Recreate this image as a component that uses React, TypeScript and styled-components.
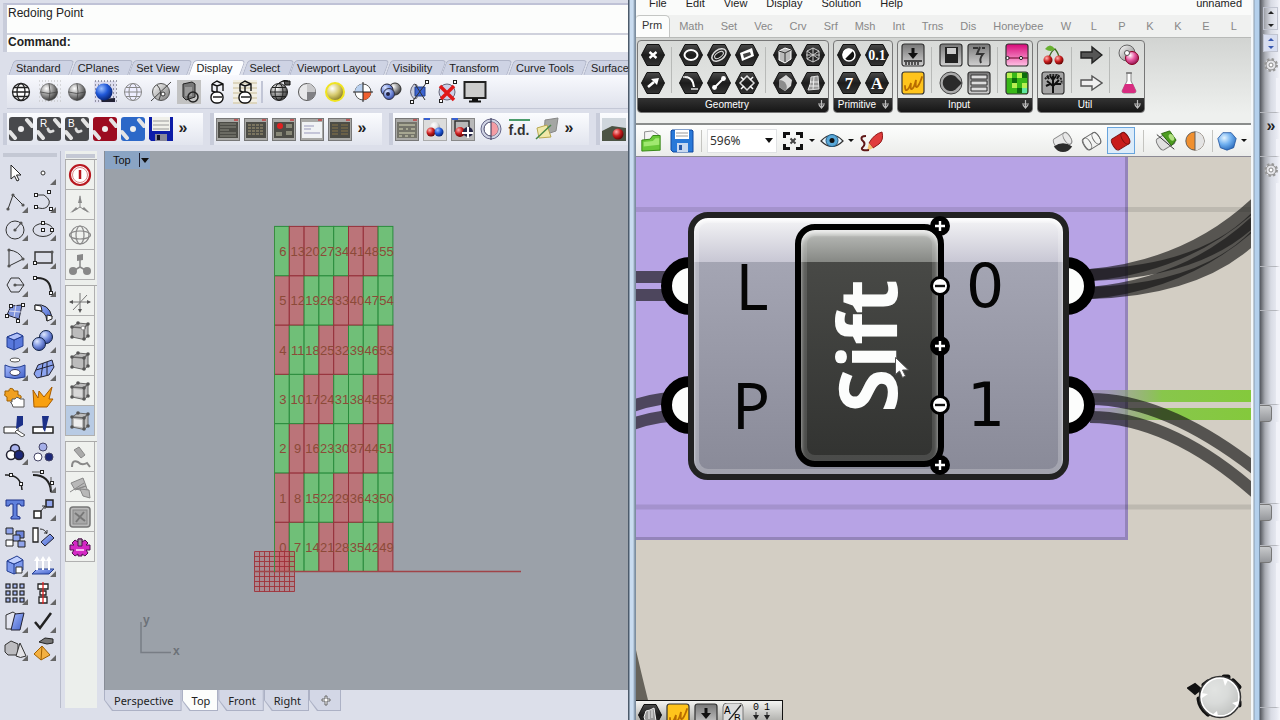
import React from "react";
import styled, { createGlobalStyle, css } from "styled-components";

const GlobalStyle = createGlobalStyle`
  * { box-sizing: border-box; }
  body { margin: 0; background: #dcdfea; font: 11px/14px "Liberation Sans", Arial, sans-serif; color: #222; }
  button, input, select { font: inherit; color: inherit; }
  svg { display: block; flex: none; }
`;

/* ---------- shared parts ---------- */

const Desktop = styled.div`
  display: grid;
  grid-template-columns: minmax(0, 628fr) minmax(0, 632fr) 20px;
  height: 100vh;
  min-height: 700px;
  overflow: hidden;
`;
const PlainButton = styled.button`
  border: 0;
  padding: 0;
  background: none;
  display: flex;
  align-items: center;
  justify-content: center;
  flex: none;
`;
const Defs = styled.svg`
  position: absolute;
  width: 0;
  height: 0;
`;

function Gradients() {
  const ball = (id: string, a: string, b: string, c: string) => (
    <radialGradient id={id} cx="0.35" cy="0.3" r="0.75">
      <stop offset="0" stopColor={a} /><stop offset="0.5" stopColor={b} /><stop offset="1" stopColor={c} />
    </radialGradient>
  );
  return (
    <Defs aria-hidden="true">
      <defs>
        {ball("ballGrey", "#fff", "#999", "#333")}
        {ball("ballLight", "#fff", "#e4e4e6", "#999")}
        {ball("ballBlue", "#9cc0ff", "#2058d8", "#06206c")}
        {ball("ballSoft", "#dfe8ff", "#7c94e0", "#3448a0")}
        {ball("ballRed", "#ffb0b0", "#cc2020", "#5c0000")}
        {ball("ballYellow", "#fff", "#d8cc70", "#807420")}
        {ball("ballPink", "#fff", "#e858a0", "#90104c")}
        {ball("ballSky", "#e4f4ff", "#70b0f0", "#2868b8")}
        {ball("ballGreen", "#c8f090", "#58a020", "#205008")}
        <linearGradient id="hex" x1="0" y1="0" x2="0" y2="1">
          <stop offset="0" stopColor="#4a4a4a" /><stop offset="0.5" stopColor="#1c1c1c" /><stop offset="1" stopColor="#333" />
        </linearGradient>
        <linearGradient id="plate" x1="0" y1="0" x2="0" y2="1">
          <stop offset="0" stopColor="#777" /><stop offset="1" stopColor="#d0d0d0" />
        </linearGradient>
        <linearGradient id="pink" x1="0" y1="0" x2="0" y2="1">
          <stop offset="0" stopColor="#d80878" /><stop offset="1" stopColor="#ffc0e4" />
        </linearGradient>
        <linearGradient id="steel" x1="0" y1="0" x2="1" y2="1">
          <stop offset="0" stopColor="#fff" /><stop offset="1" stopColor="#777" />
        </linearGradient>
        <linearGradient id="azure" x1="0" y1="0" x2="1" y2="1">
          <stop offset="0" stopColor="#a8bcff" /><stop offset="1" stopColor="#4060c8" />
        </linearGradient>
        <linearGradient id="fadeGreen" x1="0" x2="1" y1="0" y2="0">
          <stop offset="0" stopColor="#777" stopOpacity="0.35" /><stop offset="0.1" stopColor="#888c88" stopOpacity="0.5" />
          <stop offset="0.45" stopColor="#84c645" stopOpacity="0.95" /><stop offset="1" stopColor="#84c93c" />
        </linearGradient>
      </defs>
    </Defs>
  );
}

/* ---------- drawings, all on a 24 x 24 grid ---------- */

const S = "#333";
const knob = (x: number, y: number, k = "") => <rect key={k + x + "," + y} x={x - 1.5} y={y - 1.5} width="3" height="3" fill="#fff" stroke="#222" />;
const spot = (x: number, y: number) => <circle key={x + ":" + y} cx={x} cy={y} r="1.6" fill="#555" />;
const line = (d: string, c = S, w = 1) => <path d={d} fill="none" stroke={c} strokeWidth={w} />;
const globe = (fill: string, c = S, w = 1) => (
  <g fill="none" stroke={c} strokeWidth={w}>
    <circle cx="12" cy="12" r="8.5" fill={fill} />
    <ellipse cx="12" cy="12" rx="4" ry="8.5" />
    <path d="M3.5 12h17M5 7.5h14M5 16.5h14" />
  </g>
);
const dots = (c = "#bbb") => <path d="M2 1h22M2 5h22M2 9h22M2 13h22M2 17h22M2 21h22" stroke={c} strokeWidth="1" strokeDasharray="1 2" />;
const ball = (fill: string) => (
  <g><circle cx="12" cy="12" r="8.5" fill={fill} stroke="#444" strokeWidth="0.6" /><path d="M12 3.5q2 8 0 17M3.5 12q8 3 17 0" fill="none" stroke="#444" strokeWidth="0.8" /></g>
);
const film = (c: string, letter?: string) => (
  <g>
    <rect x="0" y="0" width="24" height="24" rx="3" fill={c} />
    <path d="M1 15l5 6M18 3l5 6" stroke="#e4e4e4" strokeWidth="4" strokeLinecap="round" />
    {letter ? <path d="M11 12q1 4 5 2" stroke="#ddd" strokeWidth="3" fill="none" strokeLinecap="round" /> : <circle cx="12" cy="12" r="3" fill="#eee" />}
    {letter && <text x="3" y="10" fontSize="10" fontFamily="Liberation Sans" fill="#fff">{letter}</text>}
  </g>
);
const windowIcon = (body: React.ReactNode, fill = "#4c4c46") => (
  <g>
    <rect x="0.500" y="1.500" width="23" height="22" fill="#a9a9a6" stroke="#777" />
    <rect x="2" y="5" width="20" height="16" fill={fill} />
    <path d="M18 3h4" stroke="#c04040" strokeWidth="1.500" />
    {body}
  </g>
);
const hex = (body: React.ReactNode) => (
  <g><path d="M6 1.500h12l5.500 10.500-5.500 10.500H6L.5 12z" fill="url(#hex)" stroke="#111" />{body}</g>
);
const plate = (body: React.ReactNode, fill = "url(#plate)") => (
  <g><rect x="1" y="1" width="22" height="22" rx="2.500" fill={fill} stroke="#333" strokeWidth="1.200" />{body}</g>
);
const cube = (fill: string, c = "#222", w = 1) => (
  <g fill={fill} stroke={c} strokeWidth={w} strokeLinejoin="round">
    <path d="M4 8l10-4 6 3v10l-9 4-7-3z" /><path d="M4 8l7 3 9-4M11 11v10" fill="none" />
  </g>
);
const meshCube = (mark?: React.ReactNode) => (
  <g>
    <path d="M4 8l6-4 10 1v12l-4 3.500L4 18z" fill="#bcbcbc" stroke="#666" />
    <path d="M4 8l12 1v11.500M16 9l4-4" fill="none" stroke="#666" strokeWidth="1.500" />
    {[[4, 8], [10, 4], [20, 5], [20, 17], [16, 20], [4, 18], [16, 9]].map(([x, y]) => <circle key={x + "-" + y} cx={x} cy={y} r="1.800" fill="#555" />)}
    {mark}
  </g>
);
const scribble = <path d="M4 15q0 5 2 4t4-7q-1 7 1 6t4-9q-1 8 1 7t5-10" fill="none" stroke="#b86c00" strokeWidth="1.800" strokeLinecap="round" />;
const cylinder = (fill: string, c = "#333") => (
  <g transform="rotate(-32 12 12)" stroke={c} strokeWidth="1" fill={fill}>
    <path d="M5 5h13a3 7 0 0 1 0 14H5a3 7 0 0 1 0-14z" /><ellipse cx="17.500" cy="12" rx="3.500" ry="7" />
  </g>
);
const cherry = (x: number, y: number) => <circle cx={x} cy={y} r="4.500" fill="url(#ballRed)" />;

const art: Record<string, React.ReactNode> = {
  globe: globe("#fff", "#222", 1.3),
  shaded: <g>{dots()}{ball("url(#ballGrey)")}</g>,
  rendered: ball("url(#ballGrey)"),
  blueBall: <g><path d="M1 1h22v22H1z" fill="#dde" />{dots("#445")}<path d="M8 19l14-1v4H9z" fill="#223" /><circle cx="11" cy="12" r="8.500" fill="url(#ballBlue)" /></g>,
  ghosted: globe("#eef", "#888"),
  xray: <g><circle cx="12" cy="12" r="8.500" fill="url(#steel)" stroke="#555" /><path d="M2 21L22 2M8 5q6 6 2 15" stroke="#444" fill="none" /><circle cx="14" cy="14" r="2" fill="#fff" stroke="#333" /></g>,
  technical: <g><path d="M0 0h24v24H0z" fill="#c2c2c2" /><path d="M6 4l9-2 3 2v13l-9 3-3-3z" fill="#777" stroke="#222" /><path d="M8 7h7v9H8z" fill="#999" /><circle cx="16" cy="17" r="5" fill="none" stroke="#222" strokeWidth="1.500" /></g>,
  artistic: <g fill="none" stroke="#111" strokeWidth="1.400"><path d="M7 4l5-3 6 3v7M7 4v7l5 2M7 4l5 2 6-2M12 6v6" /><rect x="6" y="12" width="12" height="11" rx="5" fill="#fff" /><path d="M8 17h9" /></g>,
  pen: <g><path d="M0 0h24v24H0z" fill="#f2efe4" /><path d="M0 3h24M0 8h24M0 13h24M0 18h24M0 23h24" stroke="#c8bc98" /><g fill="none" stroke="#111" strokeWidth="1.400"><path d="M7 4l5-3 6 3v7M7 4v7l5 2M7 4l5 2 6-2M12 6v6" /><rect x="6" y="12" width="12" height="11" rx="5" fill="#fff" /><path d="M8 17h9" /></g></g>,
  meshBall: <g>{globe("url(#ballGrey)", "#222")}<path d="M12 3q5-4 9-2M17 1h6v4h-5z" fill="#555" stroke="#111" /></g>,
  quarter: <g><circle cx="12" cy="12" r="8.500" fill="#e8e8ea" stroke="#555" /><path d="M12 3.500a8.500 8.500 0 0 1 8.500 8.500H12z" fill="#c8c8ca" /><path d="M12 12h8.500a8.500 8.500 0 0 1-8.500 8.500z" fill="#808084" /></g>,
  halo: <g><circle cx="12" cy="12" r="9" fill="url(#ballYellow)" stroke="#f0e420" strokeWidth="2" /></g>,
  target: <g><circle cx="12" cy="12" r="8" fill="#fff" stroke="#555" /><path d="M12 12h8a8 8 0 0 1-8 8z" fill="#f06030" /><path d="M12 12V4a8 8 0 0 0-8 8z" fill="#b8d0f0" /><path d="M12 2v20M2 12h20" stroke="#222" /></g>,
  camera: <g><circle cx="16" cy="9" r="6" fill="url(#ballGrey)" stroke="#333" /><circle cx="8" cy="10" r="6" fill="url(#ballSoft)" stroke="#223" /><circle cx="10" cy="14" r="5.500" fill="url(#ballSoft)" stroke="#334" /><circle cx="9" cy="14" r="2" fill="#224" /></g>,
  clip: <g><path d="M7 4q-7 8 0 15l3-1V5z" fill="#c8ccdc" stroke="#667" /><path d="M8 7h10v9H8z" fill="#3c64d0" stroke="#224090" />{line("M5 22L20 2M8 4l10 16", "#333")}{knob(20, 2)}{knob(5, 22)}</g>,
  clipOff: <g><circle cx="12" cy="12" r="8" fill="#ccd0e8" stroke="#667" />{knob(20, 2)}{knob(6, 21)}<path d="M5 6l14 14M19 6L6 19" stroke="#e01818" strokeWidth="3.500" /></g>,
  monitor: <g><rect x="1.500" y="2" width="21" height="16" fill="#ccc" stroke="#222" strokeWidth="2" /><path d="M9 18h6v3H9z" fill="#111" /><path d="M6 21.500h12" stroke="#111" strokeWidth="2" /></g>,
  film: film("#48494c"), filmR: film("#48494c", "R"), filmB: film("#48494c", "B"), filmRed: film("#9c0c20"), filmBlue: film("#2c68c8"),
  floppy: <g><path d="M0 0h24v24H2l-2-2z" fill="#0c1ca8" /><path d="M3 0h18v14H3z" fill="#f0f0ea" /><path d="M4 4h16M4 8h16M4 12h16" stroke="#999" /><path d="M6 17h12v7H6z" fill="#889" /><path d="M8 18h3v5H8z" fill="#112" /></g>,
  win1: windowIcon(<path d="M4 7h16M4 10h16M4 13h9M4 16h16M4 19h16" stroke="#8a8a80" />),
  win2: windowIcon(<path d="M4 8h16M4 11h16M4 14h16M4 17h16" stroke="#a89c78" strokeDasharray="3 1" />),
  win3: windowIcon(<g><circle cx="8" cy="9" r="3" fill="#e02020" /><path d="M14 7h6v4h-6zM4 15h6v4H4zM14 14h6v4h-6z" fill="#887" /></g>),
  win4: windowIcon(<path d="M4 9h10M4 12h7M4 16h16" stroke="#99b" />, "#f0f2f4"),
  win5: windowIcon(<path d="M4 8h6M4 11h6M4 14h6M4 17h6M13 8h7M13 11h7M13 14h7M13 17h7" stroke="#887448" />),
  win6: windowIcon(<path d="M4 8h16M4 12h4M11 12h2M16 12h4M4 16h16M4 19h3M10 19h3M16 19h3" stroke="#b8b8a0" strokeWidth="1.300" />, "#74746a"),
  balls: <g><rect x="0.500" y="1.500" width="23" height="22" fill="#dcdcdc" stroke="#aaa" /><path d="M1 2h6" stroke="#3860d0" strokeWidth="2" /><circle cx="12" cy="10" r="5" fill="url(#ballLight)" /><circle cx="8" cy="15" r="4.500" fill="url(#ballRed)" /><circle cx="16" cy="15" r="4.500" fill="url(#ballBlue)" /></g>,
  ballsMove: <g><rect x="0.500" y="1.500" width="23" height="22" fill="#b8b8b8" stroke="#888" /><path d="M1 2h6" stroke="#3860d0" strokeWidth="2" /><path d="M4 4h14v10H4z" fill="none" stroke="#333" strokeWidth="1.500" /><circle cx="9" cy="15" r="5" fill="url(#ballRed)" /><circle cx="17" cy="15" r="5" fill="#224" /><path d="M17 10v11M11 16h11" stroke="#fff" strokeWidth="2" /></g>,
  disc: <g><circle cx="12" cy="12" r="10" fill="#d0d4e4" stroke="#668" /><circle cx="12" cy="12" r="7" fill="#fff" stroke="#446" /><path d="M12 5a7 7 0 0 1 0 14z" fill="#f49ca4" /><path d="M12 1v22" stroke="#335" /></g>,
  planes: <g><path d="M10 3l13-2-2 13-12 4z" fill="#a4a6a4" stroke="#888" /><path d="M2 11l10-3 4 12-12 1z" fill="#f0e8a8" stroke="#b8a850" /><path d="M1 22L16 8" stroke="#488848" strokeWidth="1.500" /></g>,
  photo: <g><rect x="0" y="1" width="24" height="23" fill="#cfd6dc" /><path d="M0 14l10-5 14 2v13H0z" fill="#4c5444" /><circle cx="16" cy="17" r="5.500" fill="url(#ballRed)" /></g>,

  pointer: <path d="M8 4v14l3.500-3 2.500 5 2-1-2.500-5H18z" fill="#fff" stroke="#222" />,
  point: <circle cx="12" cy="12" r="2" fill="#fff" stroke="#333" />,
  polyline: <g>{line("M5 20L10 6l10 10")}{spot(5, 20)}{spot(10, 6)}{spot(20, 16)}</g>,
  curve: <g>{line("M5 6h8q9 6 3 12-4 3-11 0")}{knob(5, 6)}{knob(18, 3)}{knob(5, 18)}{knob(20, 20)}</g>,
  circle: <g><circle cx="12" cy="13" r="9" fill="none" stroke={S} />{line("M12 13l6-7")}{spot(12, 13)}{spot(18, 6)}</g>,
  ellipse: <g><ellipse cx="12" cy="13" rx="10" ry="6.500" fill="none" stroke={S} />{knob(12, 13)}{knob(12, 6)}{knob(21, 13)}</g>,
  arc: <g>{line("M6 5q10 1 14 9L6 21z")}{spot(6, 5)}{spot(20, 14)}{spot(6, 21)}</g>,
  rect: <g><path d="M4 7h17v11H4z" fill="none" stroke={S} strokeWidth="1.400" />{knob(4, 18)}{spot(21, 7)}</g>,
  polygon: <g>{line("M8 5h8l5 7-5 7H8l-4-7z")}{line("M12 12h9")}{spot(12, 12)}</g>,
  fillet: <g>{line("M5 5q15-1 15 15", "#222", 2)}{knob(4, 5)}{knob(20, 20)}</g>,
  surface: <g><path d="M8 5l11-1-3 14-12-4z" fill="#8094dc" stroke="#223" />{line("M13 4l-2 12M6 10l12 1", "#dde")}{knob(8, 5)}{knob(20, 4)}{knob(4, 15)}{knob(15, 20)}</g>,
  sweep: <g><path d="M4 4q14-2 17 12l-5 4Q15 9 4 9z" fill="url(#azure)" stroke="#222" /><path d="M4 4l6 1 1 5-7-1zM16 14l5 1v3l-5 2z" fill="#fff" stroke="#222" /></g>,
  box: <g>{cube("#5878dc", "#223c90")}<path d="M4 8l10-4 6 3-9 4z" fill="#b0c0f8" stroke="#223c90" /></g>,
  spheres: <g><circle cx="15" cy="8" r="6.500" fill="url(#ballSoft)" stroke="#124" /><circle cx="8" cy="15" r="6.500" fill="url(#ballSoft)" stroke="#124" /></g>,
  extrude: <g><ellipse cx="12" cy="3" rx="5" ry="2" fill="#fff" stroke="#555" /><path d="M2 8q10 5 20 0v12q-10 3-20 0z" fill="url(#azure)" stroke="#223c90" /><ellipse cx="12" cy="15.500" rx="5" ry="3" fill="#fff" stroke="#335" /></g>,
  mesh: <g><path d="M3 17l4-9L21 3l2 7-5 8-12 3z" fill="#8ca4f0" stroke="#223" />{line("M12 6l-2 14M5 13l17-5M16 5l0 13", "#223")}</g>,
  puzzle: <g><path d="M2 6h4q0-4 4-2l1 2h4v4q4 0 3 3l-3 1v2H4v-4q-4-2-2-3z" fill="#f0a020" stroke="#a06000" /><path d="M9 14h3q1-3 4-1l1 1h4v8H10l-1-3q-3-2 0-2z" fill="#fff" stroke="#555" /></g>,
  explode: <path d="M2 5l5 8 1-7 5 6 8-10-3 12 4 0-6 8H3z" fill="#f8a010" stroke="#a85c00" />,
  trim: <g><path d="M1 14h14v6H1z" fill="#fff" stroke="#222" /><path d="M17 3h6v9l-7 4z" fill="#1c3088" transform="translate(-3 0)" /><path d="M14 17l8 5-3 2-7-5z" fill="#fff" stroke="#555" /></g>,
  split: <g><path d="M2 14h20v6H2z" fill="#fff" stroke="#222" strokeWidth="1.500" /><path d="M11 3h7l-4 16-2-3z" fill="#1c3088" /></g>,
  groupOn: <g stroke="#223" strokeWidth="1.500"><circle cx="12" cy="8" r="4.500" fill="#aab4ee" /><circle cx="8" cy="14" r="4.500" fill="#fff" /><circle cx="16" cy="14" r="4.500" fill="#1c2878" /></g>,
  groupOff: <g stroke="#446"><circle cx="12" cy="6" r="4" fill="#a4aee8" /><circle cx="7" cy="16" r="4" fill="#fff" /><circle cx="18" cy="16" r="4" fill="#1c2878" /></g>,
  ptsOn: <g>{line("M2 6q16-1 17 15", "#222", 1.5)}{knob(8, 6)}{knob(18, 15)}</g>,
  blend: <g>{line("M2 6q17 0 18 17", "#222", 2)}{line("M1 3h11M20 8v12", "#555")}{knob(11, 3)}{knob(21, 14)}</g>,
  text: <path d="M3 3h18v6h-3l-1-2h-3v12l3 1v2H8v-2l2-1V7H7L6 9H3z" fill="#6080dc" stroke="#1c3088" />,
  scale: <g><path d="M3 14h7v7H3z" fill="#fff" stroke="#222" strokeWidth="1.500" /><path d="M15 3h7v7h-7z" fill="#90a4ec" stroke="#222" strokeWidth="1.500" />{line("M10 14l4-5M11 9h3v3")}</g>,
  blocks: <g stroke="#222"><path d="M3 3h7v6H3z" fill="#90a4ec" /><path d="M13 6h8v7h-8z" fill="#6c84dc" /><path d="M10 10h7v6h-7z" fill="#90a4ec" /><path d="M3 15h7v6H3z" fill="#fff" /><path d="M15 16h7v6h-7z" fill="#90a4ec" /></g>,
  rotate: <g><path d="M2 3h5v14H2z" fill="#fff" stroke="#222" strokeWidth="1.300" /><path d="M10 17l9-8 4 4-9 8z" fill="url(#azure)" stroke="#223" />{line("M9 4q5 0 7 5M13 8h3V5")}</g>,
  boxed: <g>{cube("#7c98ec", "#223c90")}<path d="M4 8l10-5 6 4-9 4z" fill="#c0d0ff" stroke="#223c90" /><path d="M13 14h6v6h-6z" fill="#fff" stroke="#333" /></g>,
  normals: <g><path d="M1 21l5-5h17l-5 5z" fill="url(#azure)" stroke="#223c90" />{line("M6 17V5M12 17V5M18 17V5", "#fff", 2)}<path d="M3 8l3-5 3 5zM9 8l3-5 3 5zM15 8l3-5 3 5z" fill="#fff" /></g>,
  array: <g stroke="#222" strokeWidth="1.200" fill="#a8b8f0">{[3, 10, 17].flatMap((x) => [3, 10, 17].map((y) => <rect key={x + "_" + y} x={x} y={y} width="4" height="4" />))}</g>,
  align: <g stroke="#222" strokeWidth="1.300" fill="#fff"><path d="M7 3h10v5H7zM9 10h6v4H9zM8 16h8v6H8z" /><path d="M12 1v22" stroke="#e02020" /></g>,
  sheets: <g><path d="M3 6l7-3 3 2-3 15H3z" fill="#e4e6f0" stroke="#333" /><path d="M12 5l9-1-4 17H8z" fill="url(#azure)" stroke="#223" /></g>,
  check: line("M4 13l5 6L20 4", "#222", 2.5),
  solids: <g stroke="#333"><path d="M2 8l6-4 7 3v11H5l-3-3z" fill="#bcbcc0" /><path d="M17 6l6 13q-6 3-10 0z" fill="#e4e4e8" /></g>,
  pyramid: <g><path d="M11 9l8 9-9 5-7-6z" fill="#f4b040" stroke="#a06000" /><path d="M11 9l-1 14" stroke="#a06000" /><path d="M8 5l6-4 8 1v4l-6 1z" fill="#777" stroke="#222" /></g>,

  power: <g fill="none" stroke="#b81820"><circle cx="12" cy="12" r="10" strokeWidth="2.200" fill="#fff" /><circle cx="12" cy="12" r="7.500" stroke="#d88" /><path d="M12 7v9" strokeWidth="2.500" /></g>,
  tripod: <g fill="#888">{line("M12 3v11l-8 5M12 14l8 5", "#888")}<path d="M12 2l2 8h-4zM2 20l8-4-2-2zM22 20l-8-4 2-2z" /></g>,
  wireBall: <g fill="none" stroke="#888" strokeWidth="1.200"><circle cx="12" cy="12" r="9" /><ellipse cx="12" cy="12" rx="4" ry="9" /><ellipse cx="12" cy="12" rx="10.500" ry="4" /></g>,
  nodes: <g fill="#888">{line("M12 6v8l-7 4M12 14l7 4", "#888", 1.5)}<path d="M9 2l6-1v6l-6 1z" /><circle cx="5" cy="18" r="4" /><circle cx="19" cy="18" r="4" /></g>,
  axes: <g fill="#555">{line("M2 13h20M12 4v18M5 21L19 6", "#777")}<path d="M1 13l4-2v4zM23 13l-4-2v4zM12 24l-2-4h4z" /></g>,
  cube1: meshCube(<circle cx="15" cy="9" r="2" fill="#fff" stroke="#888" />), cube2: meshCube(), cube3: meshCube(<path d="M6 10l8 1v7l-8-1z" fill="#d8d8d8" />), cube4: meshCube(<path d="M6 10l8 1v7l-8-1z" fill="#eee" />),
  brush: <g fill="#aaa" stroke="#888"><path d="M6 5l5-3 6 8-4 3z" /><path d="M4 22q0-8 6-5 4 4 9 1l3 4" fill="none" strokeWidth="2" /></g>,
  patches: <g fill="#b8b8b8" stroke="#888"><path d="M3 8l12-5 3 8-11 4zM8 14l10-3 2 6z" /><path d="M12 14l9 1 1 8-7-2z" /><path d="M2 17l14-9" /></g>,
  crossBox: <g><rect x="2" y="2" width="20" height="20" rx="3" fill="#bbb" stroke="#777" strokeWidth="1.500" /><rect x="5" y="5" width="14" height="14" fill="#a8a8a8" stroke="#888" /><path d="M7 8l10 8M16 7l-8 10" stroke="#777" strokeWidth="2" /></g>,
  gear: <g><path d="M10 4h4v3l3-2 3 3-2 2h4v5h-4l2 3-3 3-3-2v2h-4v-2l-3 2-3-3 2-3H2v-5h4L4 8l3-3 3 2z" fill="#d428c4" stroke="#501050" strokeLinejoin="round" /><path d="M8 15l8 0" stroke="#f8b0f0" strokeWidth="2" /><path d="M10 4h4v7h-4z" fill="#999" stroke="#501050" /></g>,

  hexX: hex(line("M8.500 9l7 6M15.500 9l-7 6", "#fff", 2.4)),
  hexArrow: hex(<g>{line("M7 16l6-5", "#fff", 2.6)}<path d="M10 8l8-1-2 7z" fill="#fff" /></g>),
  hexCircle: hex(<ellipse cx="12" cy="12" rx="6.500" ry="5" fill="none" stroke="#fff" strokeWidth="2" />),
  hexArc: hex(<g>{line("M6 6q8 0 9 10", "#fff", 2)}<path d="M4 6h5M12 18h7" stroke="#ddd" strokeWidth="1.500" /></g>),
  hexLoops: hex(<g transform="rotate(-35 12 12)" fill="none" stroke="#ddd"><ellipse cx="12" cy="12" rx="8" ry="5" strokeWidth="1.500" /><ellipse cx="12" cy="12" rx="5" ry="2.500" /></g>),
  hexBone: hex(<g>{line("M7.500 16.500l9-9", "#fff", 2)}<circle cx="7.500" cy="16.500" r="2.400" fill="#fff" /><circle cx="16.500" cy="7.500" r="2.400" fill="#fff" /></g>),
  hexPlane: hex(<g><path d="M5 10l12-5 2 8-12 5z" fill="#fff" /><path d="M8 11l7-2 1 3-7 3z" fill="#444" /></g>),
  hexDiamond: hex(<g><path d="M12 5l7 7-7 7-7-7z" fill="none" stroke="#ddd" strokeWidth="1.500" /><path d="M6 6l3 3M18 6l-3 3M6 18l3-3M18 18l-3-3" stroke="#fff" strokeWidth="1.500" fill="none" /></g>),
  hexBox: hex(<g><path d="M6 8l6-3 6 2v9l-6 4-6-3z" fill="#bbb" stroke="#fff" /><path d="M6 8l6 2 6-3M12 10v9" stroke="#333" fill="none" /></g>),
  hexMesh: hex(<g fill="none" stroke="#ccc"><path d="M6 8l6-3 6 3v8l-6 3-6-3zM6 8l12 8M18 8L6 16M12 5v14M5 12h14" /></g>),
  hexBrep: hex(<g><path d="M6 9l7-5 6 5-1 6-6 5-6-4z" fill="#d8d8d8" /><path d="M6 9q5 0 7 4t-1 7l-6-4z" fill="#8c8c8c" /></g>),
  hexTwist: hex(<g><path d="M10 6l7-1 1 13-11 1q3-6 3-13z" fill="#999" stroke="#ddd" /><path d="M9 11h9M8 15h10M13 6l-1 12" stroke="#eee" /></g>),
  hexBool: hex(<g><circle cx="12" cy="12" r="6" fill="#111" stroke="#fff" strokeWidth="1.500" /><path d="M7.800 16.200A6 6 0 1 1 16.200 7.800z" fill="#fff" /></g>),
  hexNum: hex(<text x="12" y="17" fontSize="14" fontWeight="700" textAnchor="middle" fontFamily="Liberation Serif" fill="#fff">0.1</text>),
  hexInt: hex(<text x="12" y="18" fontSize="17" fontWeight="700" textAnchor="middle" fontFamily="Liberation Serif" fill="#fff">7</text>),
  hexTextA: hex(<text x="12" y="18" fontSize="17" fontWeight="700" textAnchor="middle" fontFamily="Liberation Serif" fill="#fff">A</text>),
  import: plate(<g><path d="M12 5v6" stroke="#111" strokeWidth="3" /><path d="M7 10h10l-5 6z" fill="#111" /><path d="M3 18h18M5 19v3M8 19v3M11 19v3M14 19v3M17 19v3" stroke="#222" strokeWidth="1.400" /></g>),
  slider: plate(<g>{scribble}</g>, "#ffc41c"),
  toggle: plate(<g><rect x="6" y="4" width="13" height="16" fill="#222" /><rect x="8" y="5" width="9" height="6" fill="#ccc" /></g>),
  knobIcon: <g><circle cx="12" cy="12" r="11" fill="#aaa" stroke="#444" /><path d="M12 4a8 8 0 1 0 6 13l5-5-5-5q-2-3-6-3z" fill="#2a2a2a" /></g>,
  graph: plate(<path d="M6 5h5M15 5h3M13 4l-3 7h6q-4 5-2 9" stroke="#333" strokeWidth="2" fill="none" />),
  list: plate(<g fill="#ddd" stroke="#333"><path d="M4 4h16v4H4zM4 10h16v4H4zM4 16h16v4H4z" /></g>),
  gradient: plate(<g><path d="M1 15h22" stroke="#602" /><circle cx="2.500" cy="15" r="1.600" fill="#fff" stroke="#222" /><circle cx="16" cy="15" r="1.600" fill="#fff" stroke="#222" /></g>, "url(#pink)"),
  pixels: plate(<g><path d="M2 2h5v5H2zM12 2h5v5h-5zM7 12h5v5H7zM17 12h5v5h-5z" fill="#b8f050" /><path d="M7 7h5v5H7zM12 17h5v5h-5zM17 2h5v5h-5z" fill="#0c6c0c" /><path d="M17 17h5v5h-5z" fill="#60e8a0" /></g>, "#38b818"),
  cherries: <g><path d="M8 15Q10 8 14 6q4 5 4 9" fill="none" stroke="#3c6820" strokeWidth="1.300" /><path d="M14 6Q9-1 4 6q6 4 10 0z" fill="#68b030" />{cherry(7, 17)}{cherry(18, 17)}</g>,
  tree: plate(<g><path d="M12 22V12M12 15L6 10M12 15l6-6M12 12V5M9 13l-4 2M15 13l5 0M8 8L6 5M16 8l2-4M12 9l3-4M12 9L9 5" stroke="#111" strokeWidth="2" fill="none" /><path d="M4 8l4-4 8 0 4 4 1 5" stroke="#222" strokeWidth="2" strokeDasharray="2 1" fill="none" /></g>, "#a4a4a4"),
  arrowFull: <path d="M2 9h11V4l10 8-10 8v-5H2z" fill="#555" stroke="#222" strokeWidth="1.400" />,
  arrowOpen: <path d="M2 9h11V5l10 7-10 7v-4H2z" fill="#f0f0f0" stroke="#555" strokeWidth="1.400" />,
  cluster: <g><circle cx="10" cy="10" r="8" fill="url(#steel)" stroke="#666" /><circle cx="15" cy="15" r="6.500" fill="url(#ballPink)" stroke="#802" /><circle cx="10" cy="10" r="2.500" fill="#fff" stroke="#555" /></g>,
  flask: <g><path d="M10 2h4v8l5 10q0 2-2 2H7q-2 0-2-2l5-10z" fill="#fff" stroke="#888" /><path d="M8 13h8l3 7q0 2-2 2H7q-2 0-2-2z" fill="#d82c80" /><path d="M9 2h6" stroke="#777" strokeWidth="1.500" /></g>,

  open: <g><path d="M5 2l9-1 6 4v10H5z" fill="#f4f4f4" stroke="#888" /><path d="M2 11l9-1 3-4h8v16l-20 1z" fill="#68c838" stroke="#308010" /><path d="M4 13l10-1 3-3h4v7L4 18z" fill="#a0e870" /></g>,
  save: <g><path d="M2 1h20l1 1v21H3l-2-2V2z" fill="#2878d8" stroke="#1048a0" /><path d="M5 1h14v9H5z" fill="#fff" /><path d="M6 4h12M6 7h12" stroke="#999" /><path d="M7 14h11v9H7z" fill="#c8d8f0" /><path d="M9 16h3v5H9z" fill="#2858a8" /></g>,
  extents: <g fill="none" stroke="#111" strokeWidth="3"><path d="M3.500 9V4.500H9M15 4.500h5.500V9M20.500 15v4.500H15M9 19.500H3.500V15" /><path d="M9.500 9.500l5 5M14.500 9.500l-5 5" strokeWidth="2" stroke="#444" /></g>,
  eye: <g><path d="M1 12Q12 0 23 12 12 23 1 12z" fill="#e8f4fc" stroke="#333" strokeWidth="1.200" /><circle cx="12" cy="11.500" r="6" fill="#58a8d8" stroke="#205880" /><circle cx="12" cy="11.500" r="2.500" fill="#111" /></g>,
  sketch: <g><path d="M9 14Q14 5 22 3q2 8-3 12l-6 4z" fill="#e03c3c" stroke="#901818" /><path d="M9 14l4 5-6 3z" fill="#f8c070" /><path d="M6 7q-6 0-4 4 5 4 0 8-1 3 7 2" fill="none" stroke="#601818" strokeWidth="2" /></g>,
  noPreview: <g>{cylinder("#e8e8e8", "#888")}<path d="M2 18q10-7 20 0-4 6-10 6T2 18z" fill="#2c2c2c" /></g>,
  wire: <g>{cylinder("none", "#666")}<ellipse cx="7" cy="15" rx="3.500" ry="7" transform="rotate(-32 7 15)" fill="none" stroke="#666" /></g>,
  solid: cylinder("#c81c1c", "#781010"),
  selPreview: <g>{cylinder("#e0e0e0", "#777")}<path d="M7 4l9-3 7 10-5 6z" fill="#4c9c20" stroke="#246008" /><ellipse cx="18" cy="8" rx="2.500" ry="4" transform="rotate(-32 18 8)" fill="#b0e080" /><path d="M2 5l19 16" stroke="#222" /></g>,
  halfBall: <g><circle cx="12" cy="12" r="10" fill="#f09030" stroke="#555" /><path d="M12 2a10 10 0 0 1 0 20z" fill="#e4e4e4" /><path d="M12 2v20" stroke="#555" /></g>,
  quality: <path d="M7 2h10l6 7-3 11-8 3-8-3L1 9z" fill="url(#ballSky)" stroke="#2858a0" />,
  ratio: <g><rect x="1" y="0" width="20" height="24" rx="4" fill="#ddd" stroke="#777" /><path d="M3 22L19 2" stroke="#222" strokeWidth="1.300" /><text x="2" y="11" fontSize="10" fontFamily="Liberation Sans">A</text><text x="12" y="19" fontSize="10" fontFamily="Liberation Sans">B</text></g>,
  zeroOne: <g fontSize="10" fontFamily="Liberation Mono"><text x="3" y="7">0</text><text x="14" y="7">1</text><path d="M6 9v6M17 9v6" stroke="#222" /><path d="M3 12h6l-3 5zM14 12h6l-3 5zM3 18h6l-3 5zM14 18h6l-3 5z" fill="#222" /></g>,
  hand: hex(<g><path d="M8 20l-2-6 2-6 4-1 4-2 2 13z" fill="#999" stroke="#eee" /><path d="M11 8v8M14 7v8" stroke="#eee" /></g>),
};

function Icon({ name, size = 24 }: { name: string; size?: number }) {
  return <svg width={size} height={size} viewBox="0 0 24 24" aria-hidden="true">{art[name]}</svg>;
}

/* ---------- modelling window ---------- */

const Modeler = styled.section`
  display: flex;
  flex-direction: column;
  min-width: 0;
  overflow: hidden;
  background: #dcdfea;
`;
const CommandArea = styled.div`
  margin: 3px 0 8px 3px;
  border-top: 2px solid #bfc2d6;
  border-left: 4px solid #c8ccda;
  font-size: 12px;
`;
const History = styled.div`
  height: 30px;
  padding: 1px;
  background: #fcfdfc;
  border-bottom: 2px solid #cfd1dc;
`;
const Prompt = styled.label`
  display: flex;
  height: 17px;
  padding-left: 1px;
  background: #fcfdfc;
  font-weight: 700;
  line-height: 15px;
`;
const PromptInput = styled.input`
  flex: 1;
  min-width: 0;
  border: 0;
  background: transparent;
  outline: 0;
`;
const TabStrip = styled.div`
  display: flex;
  height: 15px;
  margin-left: 7px;
`;
const ToolTab = styled(PlainButton)<{ $on?: boolean }>`
  position: relative;
  z-index: ${(p) => (p.$on ? 1 : 0)};
  height: 15px;
  padding: 0 8px 0 9px;
  white-space: nowrap;
  isolation: isolate;
  &::before {
    content: "";
    position: absolute;
    inset: 0 -3px 0 4px;
    z-index: -1;
    border: 1px solid #b0b5c8;
    border-bottom: 0;
    border-radius: 4px 4px 0 0;
    background: ${(p) => (p.$on ? "#fcfdff" : "#ced3e4")};
    transform: skewX(-20deg);
  }
`;
const ToolRow = styled.div`
  display: flex;
  align-items: center;
  height: 34px;
  margin-left: 7px;
  border-bottom: 1px solid #c4c8d6;
  background: linear-gradient(#f8f9fd, #dfe2ec);
`;
const Cell = styled(PlainButton)`
  width: 28px;
  height: 28px;
`;
const Divider = styled.span`
  flex: none;
  width: 2px;
  height: 22px;
  margin: 0 2px;
  background: #c2c6d6;
`;
const PluginRow = styled.div`
  display: flex;
  height: 32px;
  margin: 4px 0 6px 3px;
`;
const PluginBar = styled.div`
  display: flex;
  flex: none;
  align-items: center;
  border-left: 4px solid #c8ccda;
  margin-right: 7px;
  padding-right: 12px;
  background: linear-gradient(#fbfcfe, #e2e5ee);
`;
const More = styled(PlainButton)`
  width: 16px;
  padding-bottom: 2px;
  font-size: 16px;
  font-weight: 700;
  color: #222;
`;
const Distance = styled.span`
  border-top: 2px solid #4c9c6c;
  font: 700 14px/18px "Liberation Sans", sans-serif;
  color: #333;
`;
const Workspace = styled.div`
  display: flex;
  flex: 1;
  min-height: 0;
`;
const Toolbox = styled.div`
  display: grid;
  grid-template-columns: 29px 28px;
  align-content: start;
  padding: 8px 3px 0 0;
  margin-bottom: 12px;
  border-right: 1px solid #b8bccb;
  background: linear-gradient(#c4c8d4, #c4c8d4) 3px 2px / 54px 4px no-repeat;
`;
const Tool = styled(PlainButton)<{ $more?: boolean }>`
  position: relative;
  height: 28px;
  ${(p) => p.$more && css`
    &::after {
      content: "";
      position: absolute;
      right: 1px;
      bottom: 2px;
      border: 3px solid transparent;
      border-right-color: #666;
      border-bottom-color: #666;
    }
  `}
`;
const GumballBar = styled.div`
  width: 32px;
  margin: 0 7px 12px 4px;
  padding-top: 8px;
  background: linear-gradient(#c4c8d4, #c4c8d4) 1px 3px / 29px 4px no-repeat, #ecefec;
`;
const GumballGroup = styled.div`
  border-top: 1px solid #aaa;
  margin-bottom: 5px;
`;
const Gumball = styled(PlainButton)<{ $on?: boolean }>`
  width: 30px;
  height: 30px;
  border: solid #b0b0b0;
  border-width: 0 1px 1px;
  background: ${(p) => (p.$on ? "#b8cbe4" : "#eff1ee")};
`;
const ViewColumn = styled.div`
  display: flex;
  flex: 1;
  flex-direction: column;
  min-width: 0;
`;
const Viewport = styled.div`
  position: relative;
  flex: 1;
  min-height: 0;
  overflow: hidden;
  border-left: 1px solid #878c96;
  background: #9ba1a9;
`;
const ViewTitle = styled(PlainButton)`
  height: 18px;
  padding: 0 0 0 8px;
  gap: 8px;
  background: #8aa4c4;
  color: #111;
`;
const ViewMenu = styled.span`
  display: flex;
  align-items: center;
  height: 14px;
  padding: 0 1px;
  border-left: 1px solid #223;
`;
const Caret = styled.i`
  border: 4px solid transparent;
  border-top: 5px solid #111;
  border-bottom: 0;
`;
const Model = styled.svg`
  position: absolute;
  left: 0;
  top: 0;
`;
const AxisMark = styled.svg`
  position: absolute;
  left: 32px;
  bottom: 32px;
`;
const ViewTabs = styled.div`
  display: flex;
  height: 30px;
  font: 11px/18px "Noto Sans", "Open Sans", sans-serif;
`;
const ViewTab = styled(PlainButton)<{ $on?: boolean }>`
  position: relative;
  isolation: isolate;
  height: 21px;
  padding: 0 8px 0 10px;
  background: #acb1c5;
  clip-path: polygon(0 0, 100% 0, 100% 100%, 8px 100%, 0 10px);
  &::before {
    content: "";
    position: absolute;
    inset: 0 1px 1px;
    z-index: -1;
    background: ${(p) => (p.$on ? "#fcfdfc" : "#d3d7e6")};
    clip-path: polygon(0 0, 100% 0, 100% 100%, 8px 100%, 0 10px);
  }
`;

function Panels() {
  const w = 14.8, h = 49.3, x0 = 169.5, y0 = 420.5;
  const cells = Array.from({ length: 56 }, (_, n) => ({ n, x: x0 + Math.floor(n / 7) * w, y: y0 - ((n % 7) + 1) * h }));
  const steps = Array.from({ length: 9 }, (_, i) => i * 5);
  return (
    <Model width="440" height="460" fontFamily="Liberation Sans" fontSize="13" textAnchor="middle">
      {cells.map(({ n, x, y }) => {
        const red = n % 4 < 2;
        return <rect key={n} x={x} y={y} width={w} height={h} fill={red ? "#bb7479" : "#70bf78"} stroke={red ? "#96303a" : "#2a8c3c"} strokeWidth="1" />;
      })}
      {cells.map(({ n, x, y }) => <text key={n} x={x + w / 2 + 1} y={y + h / 2 + 5} fill="#8c4a38">{n}</text>)}
      <rect x="149.500" y="400.500" width="40" height="40" fill="#c06068" fillOpacity="0.35" />
      {steps.map((s) => <path key={s} d={`M${149.5 + s} 400.500v40M149.500 ${400.5 + s}h40`} stroke="#a02c34" strokeWidth="1" opacity="0.85" />)}
      <path d="M149 420.500H416" stroke="#a04448" strokeWidth="1.500" />
      <path d="M169.500 75V421" stroke="#3a8c40" />
    </Model>
  );
}

const toolTabs = ["Standard", "CPlanes", "Set View", "Display", "Select", "Viewport Layout", "Visibility", "Transform", "Curve Tools", "Surface"];
const displayTools = ["globe", "shaded", "rendered", "blueBall", "ghosted", "xray", "technical", "artistic", "pen", "|", "meshBall", "quarter", "halo", "target", "camera", "clip", "clipOff", "monitor"];
const plugins = [
  ["film", "filmR", "filmB", "filmRed", "filmBlue", "floppy"],
  ["win1", "win2", "win3", "win4", "win5"],
  ["win6", "balls", "ballsMove", "disc", "f.d.", "planes"],
];
const tools = ("pointer point+ polyline+ curve+ circle+ ellipse+ arc+ rect+ polygon+ fillet+ surface+ sweep+ box+ spheres+ extrude+ mesh+ puzzle explode trim split " +
  "groupOn+ groupOff ptsOn blend+ text scale+ blocks rotate boxed+ normals+ array+ align+ sheets+ check+ solids+ pyramid+").split(" ");
const gumballs = [["power", "tripod", "wireBall", "nodes"], ["axes", "cube1", "cube2", "cube3", "cube4"], ["brush", "patches", "crossBox", "gear"]];

function ModelerWindow() {
  return (
    <Modeler>
      <CommandArea>
        <History>Redoing Point</History>
        <Prompt>Command:<PromptInput /></Prompt>
      </CommandArea>
      <TabStrip>
        {toolTabs.map((t) => <ToolTab key={t} $on={t === "Display"}>{t}</ToolTab>)}
      </TabStrip>
      <ToolRow>
        {displayTools.map((t) => t === "|" ? <Divider key={t} /> : <Cell key={t} aria-label={t}><Icon name={t} /></Cell>)}
      </ToolRow>
      <PluginRow>
        {plugins.map((bar) => (
          <PluginBar key={bar[0]}>
            {bar.map((t) => <Cell key={t} aria-label={t}>{t === "f.d." ? <Distance>f.d.</Distance> : <Icon name={t} />}</Cell>)}
            <More>»</More>
          </PluginBar>
        ))}
        <PluginBar><Cell aria-label="Render"><Icon name="photo" /></Cell></PluginBar>
      </PluginRow>
      <Workspace>
        <Toolbox>
          {tools.map((t) => {
            const name = t.replace("+", "");
            return <Tool key={t} $more={t.endsWith("+")} aria-label={name}><Icon name={name} /></Tool>;
          })}
        </Toolbox>
        <GumballBar>
          {gumballs.map((g) => (
            <GumballGroup key={g[0]}>
              {g.map((t) => <Gumball key={t} $on={t === "cube4"} aria-label={t}><Icon name={t} /></Gumball>)}
            </GumballGroup>
          ))}
        </GumballBar>
        <ViewColumn>
          <Viewport>
            <Panels />
            <ViewTitle>Top<ViewMenu><Caret /></ViewMenu></ViewTitle>
            <AxisMark width="46" height="46" fontFamily="Liberation Sans" fontSize="12" fontWeight="700" fill="#6c7178">
              <path d="M4 10v30.500h30" fill="none" stroke="#787d85" strokeWidth="1.500" />
              <text x="6" y="12">y</text><text x="36" y="43">x</text>
            </AxisMark>
          </Viewport>
          <ViewTabs>
            {["Perspective", "Top", "Front", "Right"].map((t) => <ViewTab key={t} $on={t === "Top"}>{t}</ViewTab>)}
            <ViewTab aria-label="New viewport">
              <svg width="14" height="11" viewBox="0 0 14 11"><path d="M6 1h2v3h3v2H8v4H6V6H3V4h3z" fill="#fff" stroke="#666" /></svg>
            </ViewTab>
          </ViewTabs>
        </ViewColumn>
      </Workspace>
    </Modeler>
  );
}

/* ---------- definition editor window ---------- */

const Editor = styled.section`
  display: flex;
  flex-direction: column;
  min-width: 0;
  border: solid transparent;
  border-width: 0 9px 0 8px;
  background:
    linear-gradient(#f0f1f0, #f0f1f0) padding-box,
    linear-gradient(90deg, #4c5a6a 0 1px, #c9dcf0 2px 5px, #7c8ea0 7px 8px, transparent 8px calc(100% - 9px), #f4f8fb calc(100% - 9px) calc(100% - 7px), #8c9cac calc(100% - 6px), #b4d0ec calc(100% - 5px) calc(100% - 1px), #46586a 100%) border-box;
`;
const MenuBar = styled.nav`
  display: flex;
  gap: 19px;
  height: 15px;
  padding: 0 9px 0 13px;
  background: #fafbfa;
  line-height: 6px;
`;
const MenuItem = styled(PlainButton)`
  height: 6px;
  line-height: 6px;
`;
const FileName = styled.span`
  margin-left: auto;
`;
const Categories = styled.div`
  display: flex;
  gap: 1px;
  height: 22px;
  align-items: center;
  overflow: hidden;
  color: #888;
`;
const Category = styled(PlainButton)<{ $on?: boolean }>`
  height: 22px;
  min-width: 27px;
  padding: 0 8px;
  ${(p) => p.$on && css`
    padding: 0 7px 4px 6px;
    border: 1px solid #c4c6c4;
    border-width: 1px 1px 0 0;
    border-radius: 4px 5px 0 0;
    background: #fcfdfc;
    color: #333;
  `}
`;
const Ribbon = styled.div`
  display: flex;
  align-items: flex-start;
  gap: 4px;
  height: 88px;
  padding: 2px 1px 0;
  border-top: 1px solid #b8bab8;
  border-bottom: 2px solid #8a8d8c;
  background: linear-gradient(#d2d4d2, #eef0ee 90%);
`;
const Panel = styled.div`
  border: 1px solid #777;
  border-radius: 4px;
  overflow: hidden;
  background: linear-gradient(#d8dad8, #e8eae8);
`;
const PanelBody = styled.div`
  display: flex;
  padding: 0 1px 1px;
`;
const PanelGrid = styled.div`
  display: grid;
  grid-auto-flow: column;
  grid-template-rows: 28px 28px;
  grid-auto-columns: 28px;
  & + & {
    padding-left: 10px;
    background: linear-gradient(#b8bab8, #b8bab8) 4px 6px / 1px 46px no-repeat;
  }
`;
const PanelFoot = styled.button`
  display: flex;
  justify-content: center;
  position: relative;
  width: 100%;
  height: 14px;
  border: 0;
  padding: 0 12px 0 0;
  background: linear-gradient(#333, #161616);
  color: #fff;
  font-size: 10px;
  line-height: 13px;
`;
const FootMark = styled.svg`
  position: absolute;
  right: 2px;
  top: 2px;
`;
const Toolbar = styled.div`
  display: flex;
  align-items: center;
  gap: 3px;
  height: 32px;
  padding: 0 3px 0 1px;
  border-bottom: 1px solid #8c8a94;
  background: linear-gradient(#fdfefd, #ebecea);
`;
const ToolSet = styled.div`
  display: flex;
  align-items: center;
  gap: 1px;
  margin-left: auto;
`;
const ToolItem = styled(PlainButton)<{ $on?: boolean }>`
  gap: 4px;
  min-width: 28px;
  height: 27px;
  border: 1px solid ${(p) => (p.$on ? "#68a4dc" : "transparent")};
  background: ${(p) => (p.$on ? "#dcecfa" : "none")};
`;
const SmallCaret = styled.i`
  border: 3px solid transparent;
  border-top: 3px solid #111;
  border-bottom: 0;
`;
const ZoomBox = styled.label`
  position: relative;
  display: flex;
  align-items: center;
  & ${Caret} { position: absolute; right: 4px; pointer-events: none; }
`;
const ZoomSelect = styled.select`
  appearance: none;
  width: 70px;
  height: 24px;
  border: 1px solid #e0e2e4;
  padding: 0 2px;
  background: #fff;
  font: 12px/20px "Noto Sans", "Open Sans", sans-serif;
  color: #333;
`;
const Rule = styled.span<{ $wide?: boolean }>`
  flex: none;
  width: 1px;
  height: 22px;
  margin: 0 ${(p) => (p.$wide ? 7 : 2)}px;
  background: #c4c4c0;
`;
const Canvas = styled.div`
  position: relative;
  flex: 1;
  min-height: 0;
  overflow: hidden;
  background: #d3cec4;
`;
const NodeGroup = styled.div`
  position: absolute;
  left: -4px;
  top: -4px;
  width: 496px;
  height: 387px;
  border: 3px solid #9484ba;
  background: #b7a3e5;
`;
const Layer = styled.svg`
  position: absolute;
  left: 0;
  top: 0;
`;
const Node = styled.div`
  position: absolute;
  left: 52px;
  top: 55px;
  width: 381px;
  height: 268px;
  border: 6px solid #222;
  border-radius: 20px;
  background: linear-gradient(#f4f4f6, #c8c7d4 44px, #a4a5b3 44px, #898a98);
  box-shadow: inset 0 0 0 5px rgba(255, 255, 255, 0.22), inset 0 3px 3px rgba(255, 255, 255, 0.8);
`;
const NodeCore = styled.div`
  position: absolute;
  left: 101px;
  top: 6px;
  width: 149px;
  height: 243px;
  display: flex;
  align-items: center;
  justify-content: center;
  padding-right: 8px;
  border: 6px solid #000;
  border-radius: 20px;
  background: linear-gradient(#bcbebb, #868884 32px, #484946 32px, #323331);
  box-shadow: inset 0 0 0 6px rgba(255, 255, 255, 0.12), inset 0 4px 4px rgba(255, 255, 255, 0.7);
`;
const NodeName = styled.span`
  font: 700 80px/96px "Noto Sans", "Open Sans", sans-serif;
  color: #fcfdfc;
  transform: rotate(-90deg);
`;
const Port = styled.span<{ $x: number; $y: number; $digit?: boolean }>`
  position: absolute;
  left: ${(p) => p.$x}px;
  top: ${(p) => p.$y}px;
  width: 60px;
  text-align: center;
  font: ${(p) => (p.$digit ? '60px/80px "DejaVu Sans"' : '63px/80px "Noto Sans"')}, sans-serif;
  color: #050505;
`;
const ZoomKnob = styled.button<{ $y: number; $plus?: boolean }>`
  position: absolute;
  left: 236px;
  top: ${(p) => p.$y}px;
  width: 20px;
  height: 20px;
  display: flex;
  align-items: center;
  justify-content: center;
  padding: 0;
  border: 3px solid #000;
  border-radius: 50%;
  background: ${(p) => (p.$plus ? "#000" : "#fff")};
`;
const Markov = styled.div`
  position: absolute;
  left: 0;
  bottom: 0;
  display: flex;
  gap: 4px;
  height: 20px;
  width: 147px;
  padding: 2px 2px 0;
  overflow: hidden;
  border: solid #111;
  border-width: 1px 1px 0 0;
  background: linear-gradient(#f4f4f2, #b4b4b0);
`;
const MarkovItem = styled(PlainButton)`
  height: 24px;
`;
const Compass = styled.svg`
  position: absolute;
  right: 4px;
  bottom: 0;
`;

const panels: { name: string; cols: string[][] }[] = [
  { name: "Geometry", cols: [["hexX", "hexArrow"], ["hexCircle", "hexArc", "hexLoops", "hexBone", "hexPlane", "hexDiamond"], ["hexBox", "hexBrep", "hexMesh", "hexTwist"]] },
  { name: "Primitive", cols: [["hexBool", "hexInt", "hexNum", "hexTextA"]] },
  { name: "Input", cols: [["import", "slider"], ["toggle", "knobIcon", "graph", "list"], ["gradient", "pixels"]] },
  { name: "Util", cols: [["cherries", "tree"], ["arrowFull", "arrowOpen"], ["cluster", "flask"]] },
];
const categories = "Prm Math Set Vec Crv Srf Msh Int Trns Dis Honeybee W L P K K E L".split(" ");

function Wires() {
  return (
    <Layer width="615" height="563" fill="none">
      <path d="M0 52.500h615M0 350h615" stroke="#000" strokeOpacity="0.1" strokeWidth="5" />
      <g stroke="#141414" strokeOpacity="0.65" strokeWidth="12">
        <path d="M0 120h52M0 138h52" />
        <path d="M-6 250Q20 240 52 240M-6 268Q20 258 52 258" />
        <path d="M454 118C520 112 576 88 622 44M454 136C520 130 576 106 622 62" />
        <path d="M454 118C524 116 584 98 622 58M454 136C524 134 584 116 622 76" />
      </g>
      <path d="M454 233h161v12H454zM454 251h161v12H454z" fill="url(#fadeGreen)" />
      <g stroke="#141414" strokeOpacity="0.66" strokeWidth="12">
        <path d="M454 242C510 242 566 270 622 314M454 260C510 260 566 288 622 338" />
      </g>
      <path d="M0 493q5 22 12 50v20H0z" fill="#66635b" />
      <g stroke="#000" strokeWidth="11" fill="#fcfdfc">
        {[129, 248].flatMap((y) => [54, 430].map((x) => <circle key={x + "/" + y} cx={x} cy={y} r="23.500" />))}
      </g>
    </Layer>
  );
}

function SiftNode() {
  return (
    <Node>
      <Port $x={28} $y={28}>L</Port>
      <Port $x={27} $y={147}>P</Port>
      <Port $x={261} $y={28} $digit>0</Port>
      <Port $x={262} $y={147} $digit>1</Port>
      <NodeCore><NodeName>Sift</NodeName></NodeCore>
      {[-2, 58, 118, 177, 237].map((y, i) => (
        <ZoomKnob key={y} $y={y} $plus={i % 2 === 0} aria-label={i % 2 ? "Remove output" : "Insert output"}>
          <svg width="12" height="12" viewBox="0 0 12 12"><path d={i % 2 ? "M1 6h10" : "M1 6h10M6 1v10"} stroke={i % 2 ? "#111" : "#fff"} strokeWidth="2.400" /></svg>
        </ZoomKnob>
      ))}
    </Node>
  );
}

function EditorWindow() {
  return (
    <Editor>
      <MenuBar>
        {["File", "Edit", "View", "Display", "Solution", "Help"].map((m) => <MenuItem key={m}>{m}</MenuItem>)}
        <FileName>unnamed</FileName>
      </MenuBar>
      <Categories>
        {categories.map((c, i) => <Category key={c + i} $on={i === 0}>{c}</Category>)}
      </Categories>
      <Ribbon>
        {panels.map((p) => (
          <Panel key={p.name}>
            <PanelBody>
              {p.cols.map((col) => (
                <PanelGrid key={col[0]}>{col.map((n) => <Cell key={n} aria-label={n}><Icon name={n} /></Cell>)}</PanelGrid>
              ))}
            </PanelBody>
            <PanelFoot>
              {p.name}
              <FootMark width="9" height="9" viewBox="0 0 9 9"><path d="M4.500 0v8M1 4h7M2 5l2.500 3L7 5" fill="none" stroke="#bbb" strokeWidth="1.200" /></FootMark>
            </PanelFoot>
          </Panel>
        ))}
      </Ribbon>
      <Toolbar>
        <ToolItem aria-label="Open"><Icon name="open" size={22} /></ToolItem>
        <ToolItem aria-label="Save"><Icon name="save" /></ToolItem>
        <Rule />
        <ZoomBox>
          <ZoomSelect aria-label="Zoom"><option>596%</option></ZoomSelect>
          <Caret />
        </ZoomBox>
        <ToolItem aria-label="Zoom extents"><Icon name="extents" /><SmallCaret /></ToolItem>
        <ToolItem aria-label="Preview"><Icon name="eye" /><SmallCaret /></ToolItem>
        <ToolItem aria-label="Sketch"><Icon name="sketch" /></ToolItem>
        <ToolSet>
          <ToolItem aria-label="No preview"><Icon name="noPreview" size={22} /></ToolItem>
          <ToolItem aria-label="Wireframe preview"><Icon name="wire" size={22} /></ToolItem>
          <ToolItem aria-label="Shaded preview" $on><Icon name="solid" size={22} /></ToolItem>
          <Rule $wide />
          <ToolItem aria-label="Selected only"><Icon name="selPreview" size={22} /></ToolItem>
          <ToolItem aria-label="Preview colours"><Icon name="halfBall" size={22} /></ToolItem>
          <Rule />
          <ToolItem aria-label="Mesh quality"><Icon name="quality" size={20} /><SmallCaret /></ToolItem>
        </ToolSet>
      </Toolbar>
      <Canvas>
        <NodeGroup />
        <Wires />
        <SiftNode />
        <Layer width="300" height="230" aria-hidden="true">
          <path d="M259.500 200.500v17l4-3.500 3 6.500 3-1.500-3-6h6z" fill="#fff" stroke="#555" />
        </Layer>
        <Markov>
          {["hand", "slider", "import", "ratio", "zeroOne"].map((n) => <MarkovItem key={n} aria-label={n}><Icon name={n} /></MarkovItem>)}
        </Markov>
        <Compass width="60" height="48">
          <path d="M1 16l7-4 6 5-6 5zM10 17l6 6" fill="#111" stroke="#111" strokeWidth="2" />
          <path d="M17 13l4-3M37 5h4M46 9l6 6M52 30v3M12 27q1 9 9 15" fill="none" stroke="#111" strokeWidth="5" strokeLinecap="round" />
          <circle cx="33" cy="25" r="20.500" fill="#fff" stroke="#333" strokeWidth="1.500" />
          <circle cx="33" cy="25" r="18" fill="url(#ballLight)" />
          <circle cx="33" cy="25" r="18" fill="#d4d7d4" fillOpacity="0.700" />
          <path d="M36 7l5 1-3 6zM14 21l7 1-6 4zM52 29l-7 2 6 4zM25 43l5-4 1 5z" fill="#fff" />
        </Compass>
      </Canvas>
    </Editor>
  );
}

/* ---------- docked side panel edge ---------- */

const DockEdge = styled.aside`
  display: flex;
  flex-direction: column;
  align-items: flex-end;
  overflow: hidden;
  background: linear-gradient(90deg, #55585e, #a8abb2 5px, #d8dbe4 11px, #e8eaf2 17px, #f4f5fa);
`;
const Spinner = styled(PlainButton)`
  width: 15px;
  height: 23px;
  margin: 7px 2px 0;
  border: 1px solid #c0c4d0;
  flex-direction: column;
  gap: 10px;
  & + & { margin-top: 4px; height: 18px; gap: 5px; background: #d8def0; color: #3858b0; }
`;
const UpCaret = styled.i`
  border: 3px solid transparent;
  border-bottom: 3px solid currentColor;
  border-top: 0;
`;
const DownCaret = styled.i`
  border: 3px solid transparent;
  border-top: 3px solid currentColor;
  border-bottom: 0;
`;
const DockButton = styled(PlainButton)`
  width: 18px;
  height: 26px;
  font-size: 16px;
  font-weight: 700;
`;
const DockPanel = styled.div<{ $h: number }>`
  width: 20px;
  height: ${(p) => p.$h}px;
  flex: none;
  border-right: 4px solid #f2f3f9;
  border-bottom: 1px solid #b4b6bc;
`;
const DockSlot = styled.div`
  width: 18px;
  height: 17px;
  margin-right: 8px;
  flex: none;
  border: 1px solid #777;
  border-radius: 3px;
  background: linear-gradient(#c8cacc, #96989c);
`;

const Cog = () => (
  <svg width="16" height="16" viewBox="0 0 16 16"><circle cx="8" cy="8" r="6" fill="#e4e4e8" stroke="#999" strokeWidth="2" strokeDasharray="2.400 2.300" /><circle cx="8" cy="8" r="5" fill="#e4e4e8" stroke="#888" /><circle cx="8" cy="8" r="2" fill="#fff" stroke="#888" /></svg>
);

function Dock() {
  return (
    <DockEdge>
      <Spinner aria-label="Scroll history"><UpCaret /><DownCaret /></Spinner>
      <Spinner aria-label="Resize history"><UpCaret /><DownCaret /></Spinner>
      <DockButton aria-label="Toolbar options"><Cog /></DockButton>
      <DockPanel $h={35} />
      <DockButton>»</DockButton>
      <DockPanel $h={18} />
      <DockButton aria-label="Panel options"><Cog /></DockButton>
      <DockPanel $h={84} />
      <DockPanel $h={44} />
      <DockPanel $h={94} />
      <DockSlot />
      <DockPanel $h={82} />
      <DockSlot />
      <DockPanel $h={25} />
      <DockSlot />
      <DockPanel $h={145} />
    </DockEdge>
  );
}

export default function App() {
  return (
    <Desktop>
      <GlobalStyle />
      <Gradients />
      <ModelerWindow />
      <EditorWindow />
      <Dock />
    </Desktop>
  );
}
